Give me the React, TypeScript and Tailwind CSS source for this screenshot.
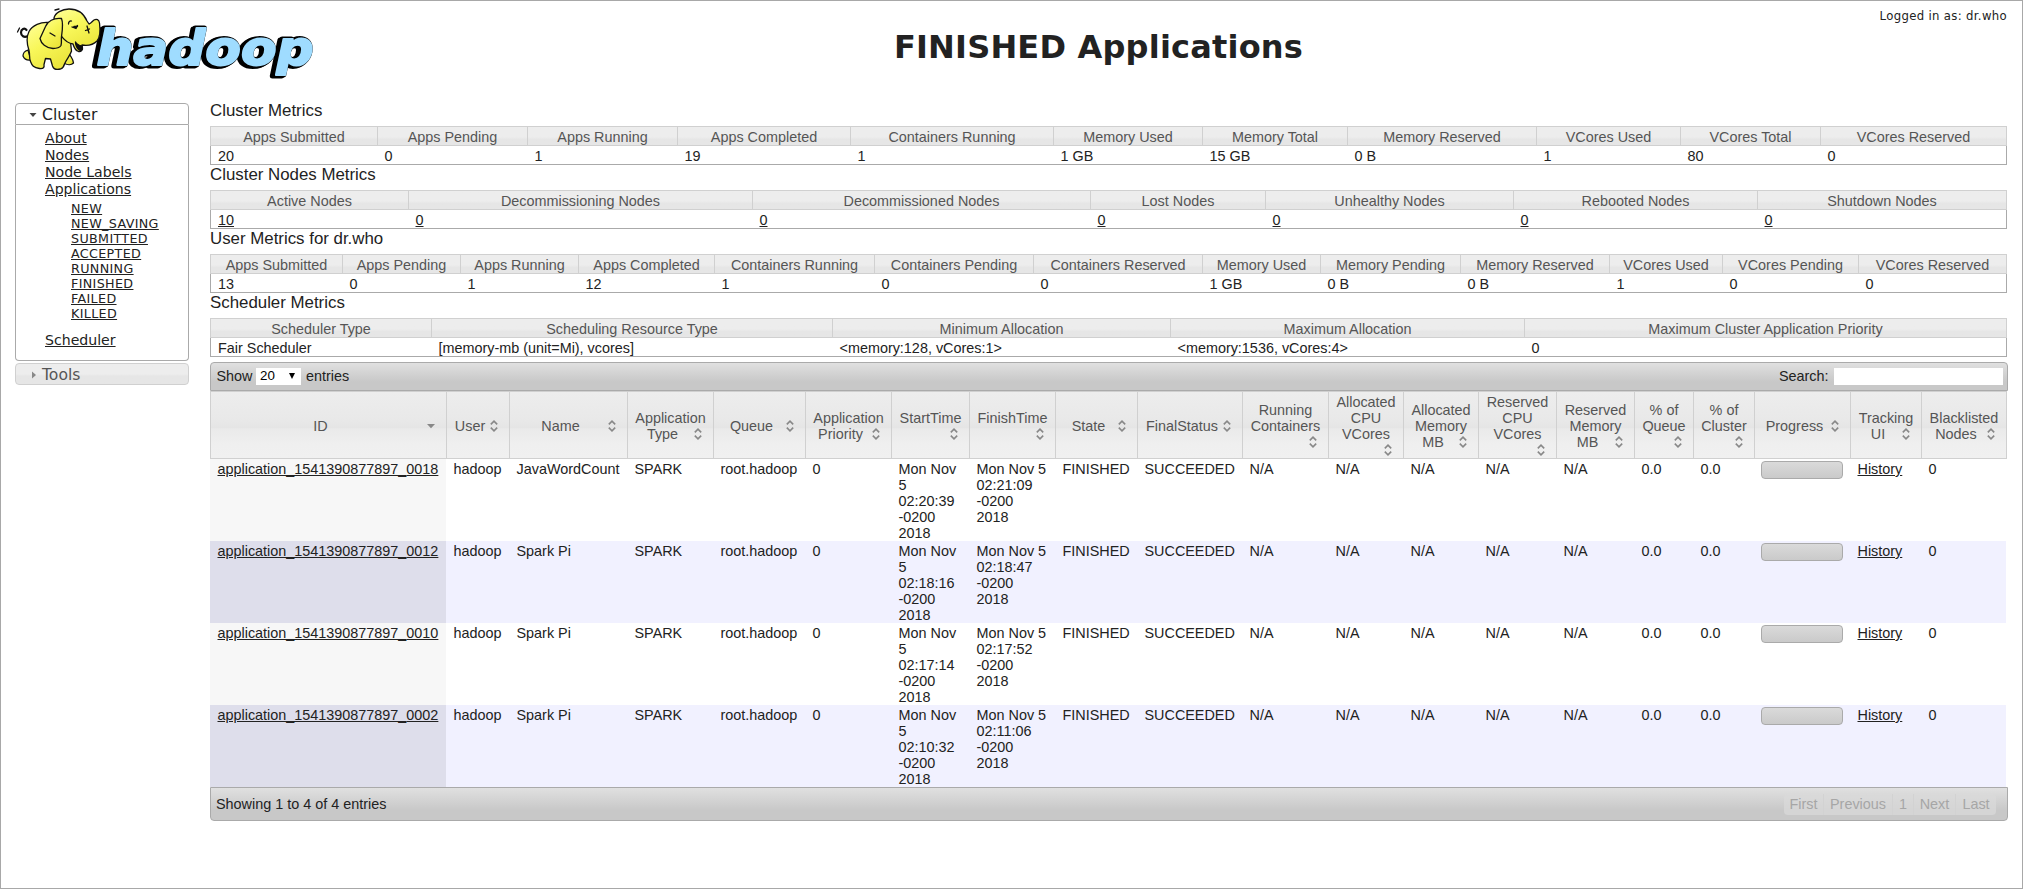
import React from "react";

const verdana = "font-['DejaVu_Sans',sans-serif]";

type Col = { label: string; value: string; w: string };

function MetricsTable({ title, cols, linked = false }: { title: string; cols: Col[]; linked?: boolean }) {
  return (
    <section className="h-16 w-[1797px]">
      <h3 className="h-[25px] text-[16.85px] leading-[19px] text-[#222]">{title}</h3>
      <table className="w-[1797px] table-fixed border-separate border-spacing-0">
        <thead>
          <tr>
            {cols.map((c) => (
              <th
                key={c.label}
                className={`${c.w} h-5 border-y border-l border-[#d0d0d0] bg-gradient-to-b from-[#ededed] from-55% to-[#e6e6e6] to-70% p-0 pt-[2px] text-center leading-4 font-normal text-[#555] last:border-r`}
              >
                {c.label}
              </th>
            ))}
          </tr>
        </thead>
        <tbody>
          <tr>
            {cols.map((c) => (
              <td
                key={c.label}
                className="h-[19px] border-b border-[#aaa] p-0 pt-[2px] pl-[7.5px] leading-4 first:border-l first:pl-[7px] last:border-r"
              >
                {linked ? <a className="underline">{c.value}</a> : c.value}
              </td>
            ))}
          </tr>
        </tbody>
      </table>
    </section>
  );
}

const cluster: Col[] = [
  { label: "Apps Submitted", value: "20", w: "w-[167px]" },
  { label: "Apps Pending", value: "0", w: "w-[150px]" },
  { label: "Apps Running", value: "1", w: "w-[150px]" },
  { label: "Apps Completed", value: "19", w: "w-[173px]" },
  { label: "Containers Running", value: "1", w: "w-[203px]" },
  { label: "Memory Used", value: "1 GB", w: "w-[149px]" },
  { label: "Memory Total", value: "15 GB", w: "w-[145px]" },
  { label: "Memory Reserved", value: "0 B", w: "w-[189px]" },
  { label: "VCores Used", value: "1", w: "w-[144px]" },
  { label: "VCores Total", value: "80", w: "w-[140px]" },
  { label: "VCores Reserved", value: "0", w: "w-[187px]" },
];

const nodes: Col[] = [
  { label: "Active Nodes", value: "10", w: "w-[198px]" },
  { label: "Decommissioning Nodes", value: "0", w: "w-[344px]" },
  { label: "Decommissioned Nodes", value: "0", w: "w-[338px]" },
  { label: "Lost Nodes", value: "0", w: "w-[175px]" },
  { label: "Unhealthy Nodes", value: "0", w: "w-[248px]" },
  { label: "Rebooted Nodes", value: "0", w: "w-[244px]" },
  { label: "Shutdown Nodes", value: "0", w: "w-[250px]" },
];

const user: Col[] = [
  { label: "Apps Submitted", value: "13", w: "w-[132px]" },
  { label: "Apps Pending", value: "0", w: "w-[118px]" },
  { label: "Apps Running", value: "1", w: "w-[118px]" },
  { label: "Apps Completed", value: "12", w: "w-[136px]" },
  { label: "Containers Running", value: "1", w: "w-[160px]" },
  { label: "Containers Pending", value: "0", w: "w-[159px]" },
  { label: "Containers Reserved", value: "0", w: "w-[169px]" },
  { label: "Memory Used", value: "1 GB", w: "w-[118px]" },
  { label: "Memory Pending", value: "0 B", w: "w-[140px]" },
  { label: "Memory Reserved", value: "0 B", w: "w-[149px]" },
  { label: "VCores Used", value: "1", w: "w-[113px]" },
  { label: "VCores Pending", value: "0", w: "w-[136px]" },
  { label: "VCores Reserved", value: "0", w: "w-[149px]" },
];

const scheduler: Col[] = [
  { label: "Scheduler Type", value: "Fair Scheduler", w: "w-[221px]" },
  { label: "Scheduling Resource Type", value: "[memory-mb (unit=Mi), vcores]", w: "w-[401px]" },
  { label: "Minimum Allocation", value: "<memory:128, vCores:1>", w: "w-[338px]" },
  { label: "Maximum Allocation", value: "<memory:1536, vCores:4>", w: "w-[354px]" },
  { label: "Maximum Cluster Application Priority", value: "0", w: "w-[483px]" },
];

const appCols: [string, string][] = [
  ["ID", "w-[236px]"],
  ["User", "w-[63px]"],
  ["Name", "w-[118px]"],
  ["Application Type", "w-[86px]"],
  ["Queue", "w-[92px]"],
  ["Application Priority", "w-[86px]"],
  ["StartTime", "w-[78px]"],
  ["FinishTime", "w-[86px]"],
  ["State", "w-[82px]"],
  ["FinalStatus", "w-[105px]"],
  ["Running Containers", "w-[86px]"],
  ["Allocated CPU VCores", "w-[75px]"],
  ["Allocated Memory MB", "w-[75px]"],
  ["Reserved CPU VCores", "w-[78px]"],
  ["Reserved Memory MB", "w-[78px]"],
  ["% of Queue", "w-[59px]"],
  ["% of Cluster", "w-[61px]"],
  ["Progress", "w-[96px]"],
  ["Tracking UI", "w-[71px]"],
  ["Blacklisted Nodes", "w-[86px]"],
];

const apps = [
  { id: "0018", name: "JavaWordCount", start: "02:20:39", finish: "02:21:09" },
  { id: "0012", name: "Spark Pi", start: "02:18:16", finish: "02:18:47" },
  { id: "0010", name: "Spark Pi", start: "02:17:14", finish: "02:17:52" },
  { id: "0002", name: "Spark Pi", start: "02:10:32", finish: "02:11:06" },
];

function SortIcon({ sorted }: { sorted: boolean }) {
  return (
    <svg className="float-right block size-4" viewBox="0 0 16 16" fill="none">
      {sorted ? (
        <path d="M4 6h8l-4 4.3z" fill="#888" />
      ) : (
        <path d="M4.8 6.4L8 3.2l3.2 3.2M4.8 9.6L8 12.8l3.2-3.2" stroke="#888" strokeWidth="1.6" />
      )}
    </svg>
  );
}

function AppsTable() {
  const cell = "p-0 pl-[7.5px] pt-[2px] align-top leading-4";
  return (
    <table className="w-[1797px] table-fixed border-separate border-spacing-0">
      <thead>
        <tr>
          {appCols.map(([label, w], i) => (
            <th
              key={label}
              className={`${w} h-[68px] border-y border-l border-[#d0d0d0] bg-[linear-gradient(#ededed,#e9e9e9_40%,#e5e5e5_54%,#eaeaea_56%,#efefef_80%,#f0f0f0)] px-[7px] pt-[2px] pb-0 text-center align-middle leading-4 font-normal text-[#555] last:border-r`}
            >
              <div>
                {label}
                <SortIcon sorted={i === 0} />
              </div>
            </th>
          ))}
        </tr>
      </thead>
      <tbody>
        {apps.map((a, i) => (
          <tr key={a.id} className={i % 2 ? "h-[82px] bg-[#f1f1ff]" : "h-[82px] bg-white"}>
            <td className={`${cell} ${i % 2 ? "bg-[#dedeeb]" : "bg-[#f7f7f7]"}`}>
              <a className="underline">application_1541390877897_{a.id}</a>
            </td>
            <td className={cell}>hadoop</td>
            <td className={cell}>{a.name}</td>
            <td className={cell}>SPARK</td>
            <td className={cell}>root.hadoop</td>
            <td className={cell}>0</td>
            <td className={`${cell} pr-[6px]`}>Mon Nov 5 {a.start} -0200 2018</td>
            <td className={cell}>
              Mon Nov 5 {a.finish} -0200
              <br />
              2018
            </td>
            <td className={cell}>FINISHED</td>
            <td className={cell}>SUCCEEDED</td>
            <td className={cell}>N/A</td>
            <td className={cell}>N/A</td>
            <td className={cell}>N/A</td>
            <td className={cell}>N/A</td>
            <td className={cell}>N/A</td>
            <td className={cell}>0.0</td>
            <td className={cell}>0.0</td>
            <td className="p-0 pt-[2px] pl-[7px] align-top">
              <div className="h-[18px] w-[82px] rounded-[4px] border border-[#aaa] bg-gradient-to-b from-[#dadada] to-[#cacaca]" />
            </td>
            <td className={cell}>
              <a className="underline">History</a>
            </td>
            <td className={`${cell} border-r border-white`}>0</td>
          </tr>
        ))}
      </tbody>
    </table>
  );
}

function Logo() {
  return (
    <svg className="block h-[84px] w-[330px]" viewBox="0 0 330 84">
      <defs>
        <linearGradient id="skin" x1="0" y1="0" x2="0.6" y2="1">
          <stop offset="0" stopColor="#ffff9a" />
          <stop offset="0.5" stopColor="#f8f75a" />
          <stop offset="1" stopColor="#ebe53c" />
        </linearGradient>
      </defs>
      <g fontFamily="DejaVu Sans" fontWeight="bold" fontStyle="italic" fontSize="48" strokeLinejoin="round">
        <text x="93" y="66" textLength="217" lengthAdjust="spacingAndGlyphs" fill="#000" stroke="#000" strokeWidth="5">hadoop</text>
        <text x="95" y="65" textLength="217" lengthAdjust="spacingAndGlyphs" fill="#000" stroke="#000" strokeWidth="5">hadoop</text>
        <text x="96.500" y="64.500" textLength="217" lengthAdjust="spacingAndGlyphs" fill="#9fdcff" stroke="#9fdcff" strokeWidth="2">hadoop</text>
      </g>
      <g stroke="#111" strokeWidth="1.300" strokeLinejoin="round" strokeLinecap="round" fill="url(#skin)">
        <path d="M28 36c-4 2-7 0-7-3.500 0-3.500 3.500-5 5.500-2.500" fill="none" strokeWidth="2.200" />
        <path d="M66 52c4 2 7 7 7.500 11-2 2-6 2-9 0.500z" />
        <path d="M28 50c-3 1-5 3.500-5 6 1.500 3.500 5 4.500 8 4z" />
        <path d="M49 22.500c-8-1-17 3-20 9-3 6-2 13 0 19 1 4 0 8 1.500 11 1.500 4 3 6.500 9 7 4 0.500 5-1 4.500-4l1.500-6 5 0.500 2 7c1 3 4 4 8 3 3-1 3.500-3 4-5 2-5 6-9 7-13l-2-18z" />
        <path d="M54 18c1-5 8-9 15-9 9 0 15 5 18 12l2 3c2-0.500 3-2.500 5-4 2.500-1.500 5-0.500 5.500 3 1 8 1 14-2.500 18-4 4-9 5-15 4l0.500 3c0 3-2 4-4 3.500-3-1-4.500-4-5.500-7.500-7-1-15-8-19-26z" />
        <path d="M75.500 42c1 2 3.500 3.500 6.500 4l0.500 3c-1 2-3 1.500-4 0.500-2-2-3-4.500-3-7.500z" fill="#111" />
        <path d="M61.500 18.500c-8-1-14 3-16 8l-5.500 12c1 5 6 9.500 13 10 4 0 7-1.500 8-3 1-3 0-6 0.500-9 1-7 2-13 0-18z" />
        <path d="M68.500 24c0-2 1.500-3.500 3-3M87 26l2 7M85.500 30.500l4-1.500M55 10l4-1M17.500 32l2-4M50 33l5 3" fill="none" />
        <path d="M72 27l4 1.500 1.500-3M74 26.500h3.500" fill="#111" />
      </g>
    </svg>
  );
}

function Sidebar() {
  const states = ["NEW", "NEW_SAVING", "SUBMITTED", "ACCEPTED", "RUNNING", "FINISHED", "FAILED", "KILLED"];
  return (
    <nav className={`${verdana} w-[174px] pt-[2px]`}>
      <div className="flex h-[22px] items-center rounded-t-[4px] border border-[#aaa] bg-white pt-px pl-[13px] text-[15.6px] leading-5">
        <svg className="mr-[5px] h-2 w-2" viewBox="0 0 8 8"><path d="M0.500 2h7l-3.500 4z" fill="#454545" /></svg>
        Cluster
      </div>
      <div className="h-[236px] rounded-b-[4px] border border-t-0 border-[#aaa] pt-[5px] pl-[29px] text-[14.1px] leading-[17px]">
        <ul>
          {["About", "Nodes", "Node Labels", "Applications"].map((l) => (
            <li key={l}><a className="underline">{l}</a></li>
          ))}
        </ul>
        <ul className="pt-[3px] pl-[26px] text-[12.7px] leading-[15px] tracking-[0.35px]">
          {states.map((l) => (
            <li key={l}><a className="underline">{l}</a></li>
          ))}
        </ul>
        <div className="pt-[11px]"><a className="underline">Scheduler</a></div>
      </div>
      <div className="mt-[2px] flex h-[22px] items-center rounded-[4px] border border-[#d0d0d0] bg-gradient-to-b from-[#ededed] from-50% to-[#e6e6e6] to-60% pt-px pl-[14px] text-[15.6px] leading-5 text-[#555]">
        <svg className="mr-[4px] h-2 w-2" viewBox="0 0 8 8"><path d="M2 0.500v7l4-3.500z" fill="#888" /></svg>
        Tools
      </div>
    </nav>
  );
}

export default function App() {
  const bar = "flex w-[1798px] items-center border border-[#aaa]";
  return (
    <div className="h-[889px] w-[2023px] overflow-hidden border border-[#a8a8a8] bg-white font-['Liberation_Sans',Arial,sans-serif] text-[14.4px] text-[#222]">
      <header className={`${verdana} flex h-[100px]`}>
        <div className="-mt-px -ml-px w-[600px]"><Logo /></div>
        <h1 className="w-[997px] pt-[26px] text-center text-[32px] leading-10 font-bold tracking-[0.2px]">
          FINISHED Applications
        </h1>
        <div className="w-[410px] pt-[8px] text-right text-[11.7px] leading-[14px] tracking-[0.33px]">Logged in as: dr.who</div>
      </header>
      <div className="flex gap-[21px] pl-[14px]">
        <Sidebar />
        <main>
          <MetricsTable title="Cluster Metrics" cols={cluster} />
          <MetricsTable title="Cluster Nodes Metrics" cols={nodes} linked />
          <MetricsTable title="User Metrics for dr.who" cols={user} />
          <MetricsTable title="Scheduler Metrics" cols={scheduler} />
          <div className={`${bar} mt-[5px] h-[29px] justify-between rounded-t-[4px] bg-gradient-to-b from-[#e0e0e0] to-[#c8c8c8] to-70% pr-[4.5px] pl-[5.5px]`}>
            <div className="flex items-center">
              Show
              <span className="mr-[5px] ml-[3.5px] flex h-[17px] w-[45px] items-center justify-between bg-white pr-[6px] pl-[4px] text-[13.33px] leading-4 text-black">
                20
                <svg className="h-[6px] w-[6px]" viewBox="0 0 6 6"><path d="M0 0h6L3 6z" fill="#000" /></svg>
              </span>
              entries
            </div>
            <label className="flex items-center gap-[5px]">
              Search:
              <input className="h-[17px] w-[169px] bg-white outline-none" />
            </label>
          </div>
          <AppsTable />
          <div className={`${bar} h-[34px] justify-between rounded-b-[4px] bg-gradient-to-b from-[#e0e0e0] to-[#c8c8c8] to-70% pr-[11px] pl-[5px]`}>
            <span className="pt-[2px]">Showing 1 to 4 of 4 entries</span>
            <div className="flex h-[21px] overflow-hidden rounded-[4px] text-[#a6a6a6]">
              {[
                ["First", "w-[40px]"],
                ["Previous", "w-[69px]"],
                ["1", "w-[21px]"],
                ["Next", "w-[42px]"],
                ["Last", "w-[40px]"],
              ].map(([l, w]) => (
                <span key={l} className={`${w} border-r border-[#d2d2d2] bg-[#dadada]/70 text-center leading-[21px] last:border-r-0`}>
                  {l}
                </span>
              ))}
            </div>
          </div>
        </main>
      </div>
    </div>
  );
}
